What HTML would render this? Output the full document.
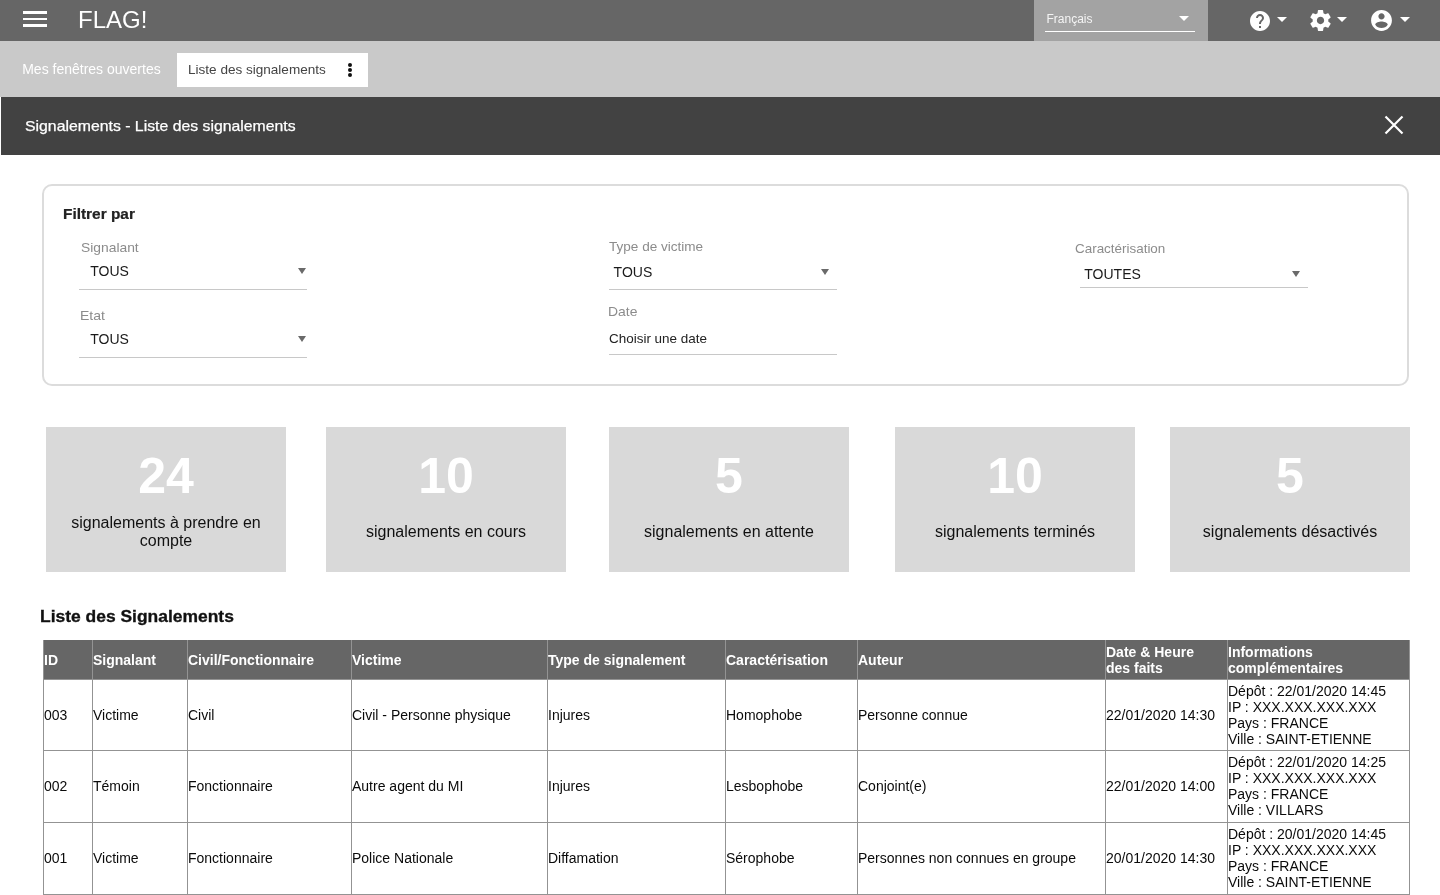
<!DOCTYPE html>
<html lang="fr">
<head>
<meta charset="utf-8">
<title>FLAG! - Liste des signalements</title>
<style>
html,body{margin:0;padding:0;}
body{width:1440px;height:895px;overflow:hidden;position:relative;will-change:transform;background:#fff;font-family:"Liberation Sans",sans-serif;}
.a{position:absolute;white-space:nowrap;line-height:20px;}
#topbar{position:absolute;left:0;top:0;width:1440px;height:41px;background:#666;}
#tabbar{position:absolute;left:0;top:41px;width:1440px;height:56px;background:#c9c9c9;}
#titlebar{position:absolute;left:1px;top:97px;width:1439px;height:58px;background:#424242;}
.hb{position:absolute;left:23px;width:24px;height:3px;background:#fff;}
#lang{position:absolute;left:1034px;top:0;width:174px;height:41px;background:#a3a3a3;}
#filter{position:absolute;left:42px;top:184px;width:1363px;height:198px;border:2px solid #dcdcdc;border-radius:10px;}
.lbl{font-size:13px;color:#8c8c8c;}
.m{transform-origin:0 0;}
.val{font-size:14px;color:#1a1a1a;}
.uline{position:absolute;height:1px;background:#c8c8c8;}
.tri{position:absolute;width:0;height:0;border-left:4px solid transparent;border-right:4px solid transparent;border-top:6px solid #6a6a6a;}
.card{position:absolute;top:427px;width:240px;height:145px;background:#d9d9d9;text-align:center;}
.card .num{position:absolute;left:0;right:0;top:18.6px;font-size:50px;line-height:60px;font-weight:bold;color:#fff;}
.card .txt{position:absolute;left:0;right:0;font-size:16px;line-height:18px;color:#111;white-space:normal;}
.vl{position:absolute;top:640px;width:1px;height:255px;background:#939393;}
.hl{position:absolute;left:43px;width:1367px;height:1px;background:#939393;}
.th{position:absolute;white-space:nowrap;font-size:14px;line-height:16px;font-weight:bold;color:#fff;}
.td{position:absolute;white-space:nowrap;font-size:14px;line-height:16px;color:#0a0a0a;}
</style>
</head>
<body>
<div id="topbar"></div>
<div class="hb" style="top:11px"></div>
<div class="hb" style="top:17.5px;height:2.8px"></div>
<div class="hb" style="top:24px"></div>
<div class="a" style="left:78px;top:9.7px;font-size:24px;color:#fff;">FLAG!</div>

<div id="lang"></div>
<div class="a" style="left:1046.5px;top:8.8px;font-size:12px;color:#f4f4f4;">Français</div>
<div style="position:absolute;left:1045px;top:31px;width:150px;height:1px;background:#fff;"></div>
<div class="tri" style="left:1179px;top:16px;border-left-width:5px;border-right-width:5px;border-top:5px solid #fff;"></div>

<svg style="position:absolute;left:1248px;top:8.8px" width="24" height="24" viewBox="0 0 24 24"><path fill="#fff" d="M12 2C6.48 2 2 6.48 2 12s4.48 10 10 10 10-4.48 10-10S17.52 2 12 2zm1 17h-2v-2h2v2zm2.07-7.75l-.9.92C13.45 12.9 13 13.5 13 15h-2v-.5c0-1.1.45-2.1 1.170-2.83l1.24-1.26c.37-.36.59-.86.59-1.41 0-1.1-.9-2-2-2s-2 .9-2 2H8c0-2.21 1.79-4 4-4s4 1.790 4 4c0 .88-.36 1.68-.93 2.25z"/></svg>
<svg style="position:absolute;left:1269.8px;top:6.7px" width="24" height="24" viewBox="0 0 24 24"><path fill="#fff" d="M7 10l5 5 5-5z"/></svg>
<svg style="position:absolute;left:1308px;top:8.2px" width="25" height="25" viewBox="0 0 24 24"><path fill="#fff" d="M19.43 12.98c.04-.32.07-.64.07-.98s-.03-.66-.07-.98l2.11-1.65c.19-.15.24-.42.12-.64l-2-3.46c-.12-.22-.39-.3-.61-.22l-2.49 1c-.52-.4-1.08-.73-1.69-.98l-.38-2.650C14.46 2.18 14.25 2 14 2h-4c-.25 0-.46.18-.49.42l-.38 2.65c-.61.25-1.170.59-1.69.98l-2.49-1c-.23-.09-.49 0-.61.22l-2 3.46c-.13.22-.07.49.12.64l2.11 1.65c-.04.32-.07.65-.07.98s.03.66.07.98l-2.11 1.65c-.19.15-.24.42-.12.64l2 3.46c.12.22.39.3.61.22l2.49-1c.52.4 1.08.73 1.69.98l.38 2.65c.03.24.24.42.49.42h4c.25 0 .46-.18.49-.42l.38-2.65c.61-.25 1.17-.59 1.69-.98l2.49 1c.23.09.49 0 .61-.22l2-3.46c.12-.22.07-.49-.12-.64l-2.11-1.65zM12 15.5c-1.93 0-3.5-1.57-3.5-3.5s1.57-3.5 3.5-3.5 3.5 1.57 3.5 3.5-1.57 3.5-3.5 3.5z"/></svg>
<svg style="position:absolute;left:1330px;top:6.7px" width="24" height="24" viewBox="0 0 24 24"><path fill="#fff" d="M7 10l5 5 5-5z"/></svg>
<svg style="position:absolute;left:1368.6px;top:7.9px" width="25" height="25" viewBox="0 0 24 24"><path fill="#fff" d="M12 2C6.48 2 2 6.48 2 12s4.48 10 10 10 10-4.48 10-10S17.52 2 12 2zm0 3c1.66 0 3 1.34 3 3s-1.34 3-3 3-3-1.34-3-3 1.34-3 3-3zm0 14.2c-2.5 0-4.710-1.28-6-3.22.03-1.99 4-3.08 6-3.08 1.99 0 5.97 1.09 6 3.08-1.29 1.94-3.5 3.22-6 3.22z"/></svg>
<svg style="position:absolute;left:1393.4px;top:6.7px" width="24" height="24" viewBox="0 0 24 24"><path fill="#fff" d="M7 10l5 5 5-5z"/></svg>

<div id="tabbar"></div>
<div class="a" style="left:22.2px;top:58.75px;font-size:14px;color:#fff;">Mes fenêtres ouvertes</div>
<div style="position:absolute;left:177px;top:53px;width:191px;height:34px;background:#fff;"></div>
<div class="a m" style="left:188px;top:59.7px;font-size:13px;transform:scaleX(1.042);color:#444;">Liste des signalements</div>
<div style="position:absolute;left:348px;top:63px;width:4px;height:4px;border-radius:50%;background:#111;"></div>
<div style="position:absolute;left:348px;top:68px;width:4px;height:4px;border-radius:50%;background:#111;"></div>
<div style="position:absolute;left:348px;top:73px;width:4px;height:4px;border-radius:50%;background:#111;"></div>

<div id="titlebar"></div>
<div class="a m" style="left:24.5px;top:116.4px;font-size:15px;transform:scaleX(1.054);-webkit-text-stroke:0.25px #fff;color:#fff;">Signalements - Liste des signalements</div>
<svg style="position:absolute;left:1380px;top:111px" width="28" height="28" viewBox="0 0 28 28"><path d="M5.5 5.5L22.5 22.5M22.5 5.5L5.5 22.5" stroke="#fff" stroke-width="2.2" fill="none"/></svg>

<div id="filter"></div>
<div class="a m" style="left:62.7px;top:203.9px;font-size:14px;font-weight:bold;transform:scaleX(1.1);-webkit-text-stroke:0.2px #222;color:#222;">Filtrer par</div>

<div class="a m lbl" style="left:80.8px;top:237.9px;transform:scaleX(1.064);">Signalant</div>
<div class="a val" style="left:90.2px;top:261.25px;">TOUS</div>
<div class="tri" style="left:298px;top:268px;"></div>
<div class="uline" style="left:79px;top:289px;width:228px;"></div>

<div class="a m lbl" style="left:80.3px;top:305.6px;transform:scaleX(1.08);">Etat</div>
<div class="a val" style="left:90.2px;top:329.15px;">TOUS</div>
<div class="tri" style="left:298px;top:336px;"></div>
<div class="uline" style="left:79px;top:357px;width:228px;"></div>

<div class="a m lbl" style="left:609.2px;top:237px;transform:scaleX(1.042);">Type de victime</div>
<div class="a val" style="left:613.6px;top:262.35px;">TOUS</div>
<div class="tri" style="left:821px;top:269px;"></div>
<div class="uline" style="left:609px;top:289px;width:228px;"></div>

<div class="a m lbl" style="left:608px;top:301.5px;transform:scaleX(1.07);">Date</div>
<div class="a m" style="left:609.2px;top:328.7px;font-size:13px;transform:scaleX(1.035);color:#222;">Choisir une date</div>
<div class="uline" style="left:609px;top:354px;width:228px;"></div>

<div class="a m lbl" style="left:1075px;top:239.2px;transform:scaleX(1.033);">Caractérisation</div>
<div class="a val" style="left:1084.3px;top:263.9px;">TOUTES</div>
<div class="tri" style="left:1292px;top:271px;"></div>
<div class="uline" style="left:1080px;top:287px;width:228px;"></div>

<div class="card" style="left:46px;"><div class="num">24</div><div class="txt" style="top:86.5px;">signalements à prendre en<br>compte</div></div>
<div class="card" style="left:326px;"><div class="num">10</div><div class="txt" style="top:96px;">signalements en cours</div></div>
<div class="card" style="left:609px;"><div class="num">5</div><div class="txt" style="top:96px;">signalements en attente</div></div>
<div class="card" style="left:895px;"><div class="num">10</div><div class="txt" style="top:96px;">signalements terminés</div></div>
<div class="card" style="left:1170px;"><div class="num">5</div><div class="txt" style="top:96px;">signalements désactivés</div></div>

<div class="a m" style="left:39.7px;top:606.66px;font-size:16px;font-weight:bold;transform:scaleX(1.09);-webkit-text-stroke:0.3px #111;color:#111;">Liste des Signalements</div>

<div id="thead" style="position:absolute;left:43px;top:640px;width:1367px;height:39px;background:#666;"></div>
<div class="vl" style="left:43px;"></div>
<div class="vl" style="left:92px;"></div>
<div class="vl" style="left:187px;"></div>
<div class="vl" style="left:351px;"></div>
<div class="vl" style="left:547px;"></div>
<div class="vl" style="left:725px;"></div>
<div class="vl" style="left:857px;"></div>
<div class="vl" style="left:1105px;"></div>
<div class="vl" style="left:1227px;"></div>
<div class="vl" style="left:1409px;"></div>
<div class="hl" style="top:679px;"></div>
<div class="hl" style="top:750px;"></div>
<div class="hl" style="top:822px;"></div>
<div class="hl" style="top:894px;"></div>
<div class="th" style="left:44px;top:652.15px;">ID</div>
<div class="th" style="left:93px;top:652.15px;">Signalant</div>
<div class="th" style="left:188px;top:652.15px;">Civil/Fonctionnaire</div>
<div class="th" style="left:352px;top:652.15px;">Victime</div>
<div class="th" style="left:548px;top:652.15px;">Type de signalement</div>
<div class="th" style="left:726px;top:652.15px;">Caractérisation</div>
<div class="th" style="left:858px;top:652.15px;">Auteur</div>
<div class="th" style="left:1106px;top:644px;">Date &amp; Heure<br>des faits</div>
<div class="th" style="left:1228px;top:644px;">Informations<br>complémentaires</div>
<div class="td" style="left:44px;top:707.15px;">003</div>
<div class="td" style="left:93px;top:707.15px;">Victime</div>
<div class="td" style="left:188px;top:707.15px;">Civil</div>
<div class="td" style="left:352px;top:707.15px;">Civil - Personne physique</div>
<div class="td" style="left:548px;top:707.15px;">Injures</div>
<div class="td" style="left:726px;top:707.15px;">Homophobe</div>
<div class="td" style="left:858px;top:707.15px;">Personne connue</div>
<div class="td" style="left:1106px;top:707.15px;">22/01/2020 14:30</div>
<div class="td" style="left:1228px;top:683px;">Dépôt : 22/01/2020 14:45<br>IP : XXX.XXX.XXX.XXX<br>Pays : FRANCE<br>Ville : SAINT-ETIENNE</div>
<div class="td" style="left:44px;top:777.8px;">002</div>
<div class="td" style="left:93px;top:777.8px;">Témoin</div>
<div class="td" style="left:188px;top:777.8px;">Fonctionnaire</div>
<div class="td" style="left:352px;top:777.8px;">Autre agent du MI</div>
<div class="td" style="left:548px;top:777.8px;">Injures</div>
<div class="td" style="left:726px;top:777.8px;">Lesbophobe</div>
<div class="td" style="left:858px;top:777.8px;">Conjoint(e)</div>
<div class="td" style="left:1106px;top:777.8px;">22/01/2020 14:00</div>
<div class="td" style="left:1228px;top:754px;">Dépôt : 22/01/2020 14:25<br>IP : XXX.XXX.XXX.XXX<br>Pays : FRANCE<br>Ville : VILLARS</div>
<div class="td" style="left:44px;top:850.15px;">001</div>
<div class="td" style="left:93px;top:850.15px;">Victime</div>
<div class="td" style="left:188px;top:850.15px;">Fonctionnaire</div>
<div class="td" style="left:352px;top:850.15px;">Police Nationale</div>
<div class="td" style="left:548px;top:850.15px;">Diffamation</div>
<div class="td" style="left:726px;top:850.15px;">Sérophobe</div>
<div class="td" style="left:858px;top:850.15px;">Personnes non connues en groupe</div>
<div class="td" style="left:1106px;top:850.15px;">20/01/2020 14:30</div>
<div class="td" style="left:1228px;top:826px;">Dépôt : 20/01/2020 14:45<br>IP : XXX.XXX.XXX.XXX<br>Pays : FRANCE<br>Ville : SAINT-ETIENNE</div>
</body>
</html>
